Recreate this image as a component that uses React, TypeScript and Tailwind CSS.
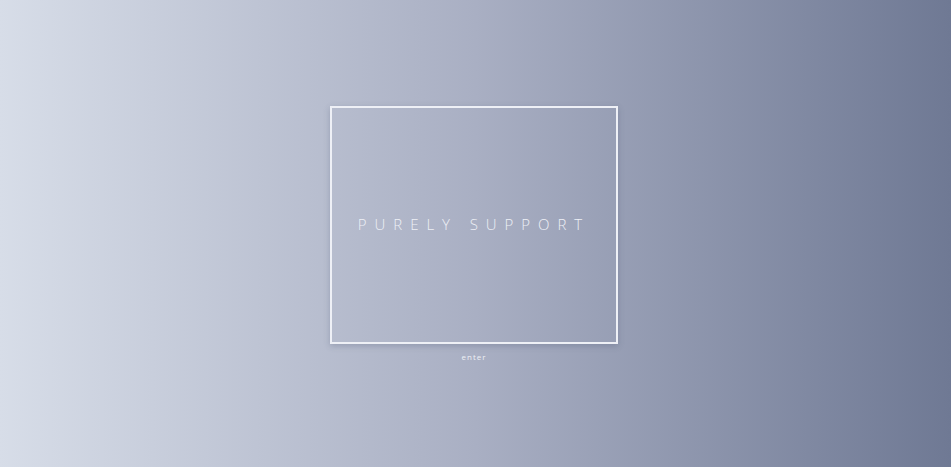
export default function App() {
  return (
    <div className="h-screen w-full bg-gradient-to-r from-[#d7dde8] via-[#a9afc3] to-[#6f7994] flex items-center justify-center pr-[3px] font-['Open_Sans','Lato',sans-serif]">
      <div className="flex flex-col items-center gap-[9px]">
        <div className="w-[288px] h-[238px] border-2 border-[#eef0f6] shadow-[0_2px_6px_rgba(60,70,100,0.25)] flex items-center justify-center">
          <h1 className="text-[15px] font-light text-[#eef0f6] tracking-[0.53em] -mt-[2px] uppercase">
            Purely Support
          </h1>
        </div>
        <a href="#" className="text-[8px] text-[#eef0f5] tracking-[0.12em] leading-none">
          enter
        </a>
      </div>
    </div>
  )
}
